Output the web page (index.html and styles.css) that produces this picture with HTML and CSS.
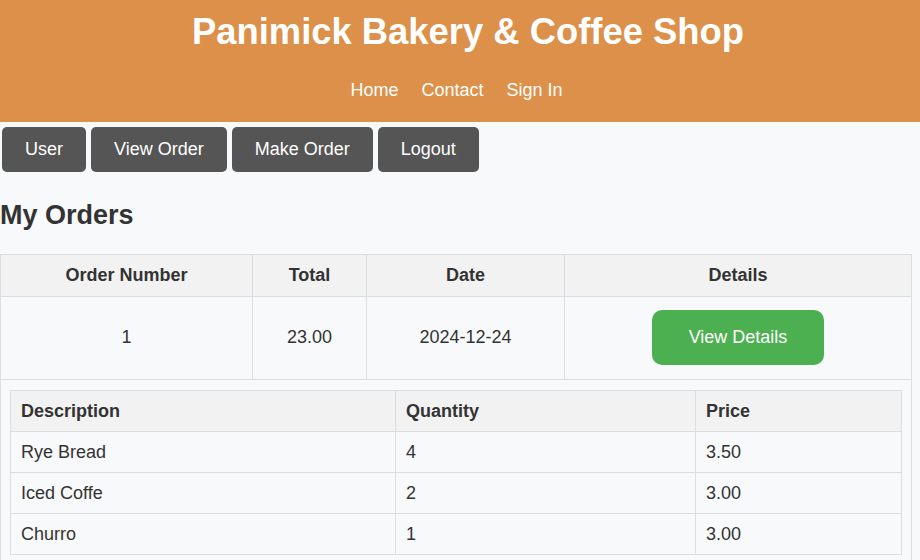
FILE: index.html
```html
<!DOCTYPE html>
<html>
<head>
<meta charset="utf-8">
<title>Panimick Bakery & Coffee Shop</title>
<link rel="stylesheet" href="styles.css">
</head>
<body>
<header class="site-header">
  <h1 class="site-title">Panimick Bakery &amp; Coffee Shop</h1>
  <nav class="site-nav">
    <a href="#">Home</a>
    <a href="#">Contact</a>
    <a href="#">Sign In</a>
  </nav>
</header>
<div class="toolbar">
  <button class="tool-btn">User</button>
  <button class="tool-btn">View Order</button>
  <button class="tool-btn">Make Order</button>
  <button class="tool-btn">Logout</button>
</div>
<h2 class="page-title">My Orders</h2>
<table class="orders">
  <colgroup>
    <col class="c-num"><col class="c-total"><col class="c-date"><col class="c-details">
  </colgroup>
  <thead>
    <tr><th>Order Number</th><th>Total</th><th>Date</th><th>Details</th></tr>
  </thead>
  <tbody>
    <tr class="order-row">
      <td>1</td><td>23.00</td><td>2024-12-24</td>
      <td><button class="details-btn">View Details</button></td>
    </tr>
    <tr class="items-row">
      <td colspan="4">
        <table class="items">
          <colgroup><col class="c-desc"><col class="c-qty"><col class="c-price"></colgroup>
          <thead><tr><th>Description</th><th>Quantity</th><th>Price</th></tr></thead>
          <tbody>
            <tr><td>Rye Bread</td><td>4</td><td>3.50</td></tr>
            <tr><td>Iced Coffe</td><td>2</td><td>3.00</td></tr>
            <tr><td>Churro</td><td>1</td><td>3.00</td></tr>
          </tbody>
        </table>
      </td>
    </tr>
  </tbody>
</table>
</body>
</html>
```

FILE: styles.css
```css
* { box-sizing: border-box; }
html, body { margin: 0; padding: 0; }
body {
  background: #f8f9fa;
  color: #333;
  font-family: "Liberation Sans", Arial, sans-serif;
  overflow: hidden;
}
.site-header {
  background: #dc9049;
  color: #fff;
  text-align: center;
  padding: 11px 0 21px;
}
.site-title {
  margin: 0;
  padding-left: 16px;
  font-size: 36.4px;
  line-height: 41px;
  font-weight: bold;
}
.site-nav {
  margin-top: 28px;
  padding-right: 7px;
  display: flex;
  justify-content: center;
  gap: 23px;
  font-size: 18px;
  line-height: 21px;
}
.site-nav a { color: #fff; text-decoration: none; }
.toolbar {
  display: flex;
  gap: 5px;
  padding: 5px 2px 0;
}
.tool-btn {
  background: #555;
  color: #fff;
  border: none;
  border-radius: 5px;
  font-family: inherit;
  font-size: 18px;
  line-height: 21px;
  padding: 12px 23px;
}
.page-title {
  margin: 28px 0 23px;
  font-size: 27px;
  line-height: 31px;
  font-weight: bold;
  color: #333;
}
table { border-collapse: collapse; }
.orders {
  width: 911px;
  table-layout: fixed;
}
.c-num { width: 252px; }
.c-total { width: 114px; }
.c-date { width: 198px; }
.c-details { width: 347px; }
.orders th, .orders td {
  border: 1px solid #ddd;
  font-size: 18px;
  line-height: 21px;
  text-align: center;
}
.orders th {
  background: #f2f2f2;
  padding: 10px;
  font-weight: bold;
}
.order-row td { padding: 13px 10px 14px; }
.details-btn {
  background: #4caf50;
  color: #fff;
  border: none;
  border-radius: 10px;
  font-family: inherit;
  font-size: 18px;
  line-height: 21px;
  height: 55px;
  padding: 0 37px;
  vertical-align: middle;
}
.orders .items-row > td { padding: 10px 10px 10px 9px; text-align: left; }
.items {
  width: 891px;
  table-layout: fixed;
}
.c-desc { width: 385px; }
.c-qty { width: 300px; }
.c-price { width: 206px; }
.orders .items th, .orders .items td {
  text-align: left;
  line-height: 20px;
  padding: 10px;
}
```
